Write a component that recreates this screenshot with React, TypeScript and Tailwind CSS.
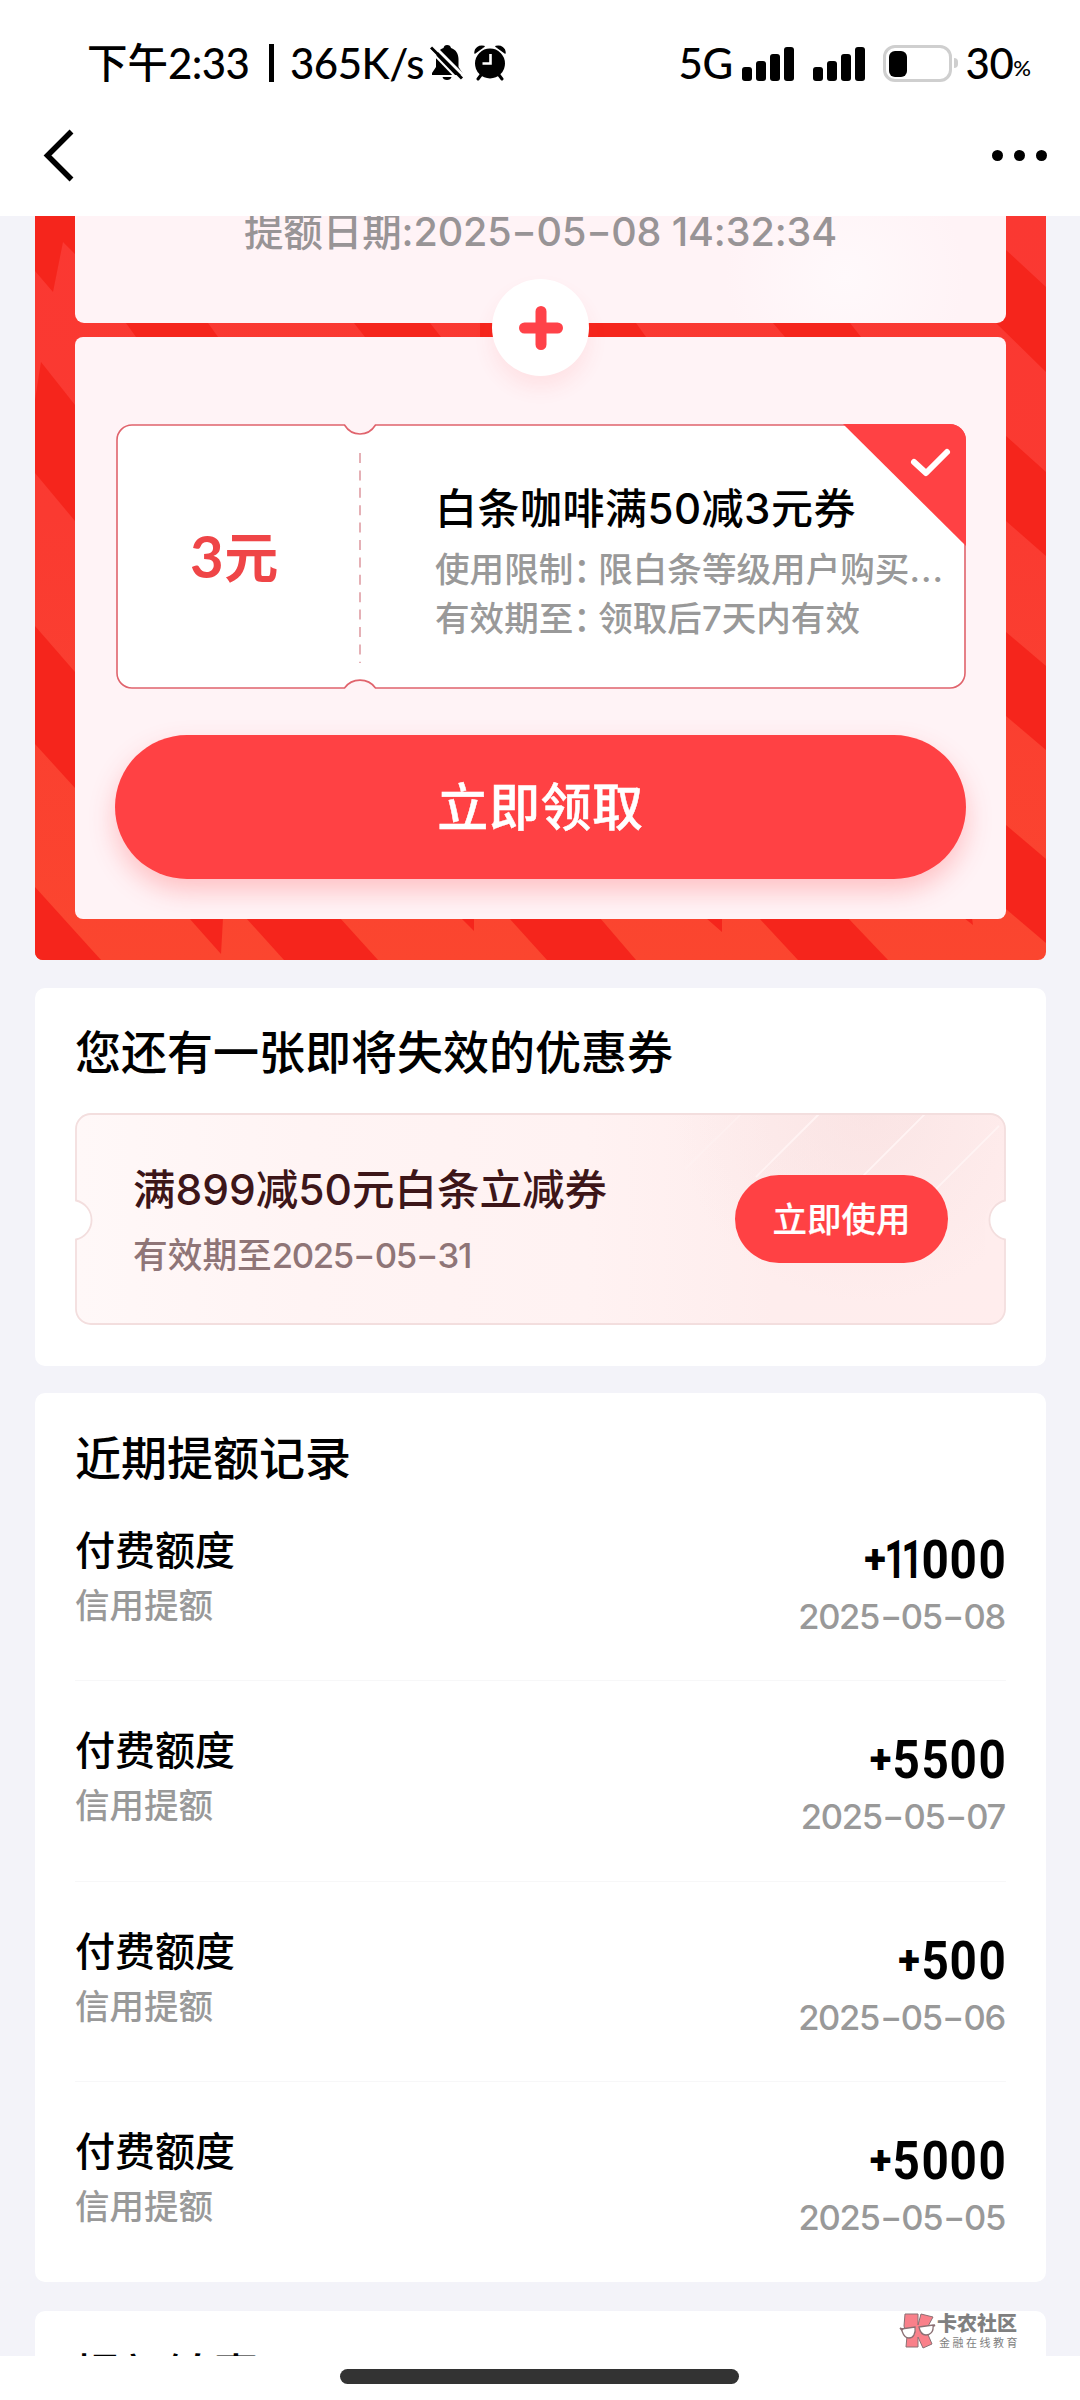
import React from 'react';

const records = [
  { amount: '+11000', date: '2025-05-08' },
  { amount: '+5500', date: '2025-05-07' },
  { amount: '+500', date: '2025-05-06' },
  { amount: '+5000', date: '2025-05-05' },
];

// Wide dash used between the date parts
function DateText({ text }: { text: string }) {
  return (
    <>
      {text.split('').map((ch, i) =>
        ch === '-' ? (
          <span key={i} className="inline-block w-[0.63em] text-center">
            <span className="inline-block scale-x-140">-</span>
          </span>
        ) : (
          <span key={i}>{ch}</span>
        )
      )}
    </>
  );
}

function Amount({ text }: { text: string }) {
  return (
    <p className="font-['Roboto'] font-bold text-[53px] leading-[56px] text-black flex items-center">
      {text.split('').map((ch, i) => {
        if (ch === '+') return <span key={i} className="w-[23px] text-[40px] font-extrabold flex justify-center">+</span>;
        if (ch === '1')
          return (
            <span key={i} className="w-[17px] flex justify-center">
              <span className="scale-x-70">1</span>
            </span>
          );
        return (
          <span key={i} className="w-[28.5px] flex justify-center">
            <span className="scale-x-90">{ch}</span>
          </span>
        );
      })}
    </p>
  );
}

function SignalBars() {
  return (
    <div className="flex items-end gap-1 h-[35px]">
      <div className="w-[10px] h-[14px] rounded-[3px] bg-black"></div>
      <div className="w-[10px] h-[20px] rounded-[3px] bg-black"></div>
      <div className="w-[10px] h-[27px] rounded-[3px] bg-black"></div>
      <div className="w-[10px] h-[34px] rounded-[3px] bg-black"></div>
    </div>
  );
}

function StatusBar() {
  return (
    <div className="h-[126px] pl-[87px] pr-[49px] flex items-center justify-between font-['Lato','Noto_Sans_CJK_SC',sans-serif] font-medium text-[42px] text-black">
      <div className="flex items-center h-[60px] whitespace-nowrap">
        <span className="w-[81px] text-[40.5px]">下午</span>
        <span className="w-[84px] tracking-[-0.6px]">2:33</span>
        <span className="w-[5px] h-[38px] bg-black ml-[17px] mr-[16px]"></span>
        <span className="w-[140px] tracking-[-0.5px]">365K/s</span>
        <svg className="w-[34px] h-[38px]" viewBox="0 0 34 38">
          <path d="M17 1c2.500 0 3.500 1.200 4 3 5 1.500 7.500 6 7.500 11v8l4 6v2H2v-2l4-6v-8c0-5 2.500-9.500 7.500-11 .5-1.800 1.500-3 3.500-3z" fill="#000" />
          <path d="M12.500 33h9c-.5 2-2 3-4.500 3s-4-1-4.500-3z" fill="#000" />
          <path d="M4 2l31 31" stroke="#fff" strokeWidth="3" />
          <path d="M1 3.500l31 31" stroke="#000" strokeWidth="3" />
          <path d="M-1 5.500l30 31" stroke="#fff" strokeWidth="2" />
        </svg>
        <svg className="w-[32px] h-[36px] ml-[10px]" viewBox="0 0 32 36">
          <path d="M1 8c0-5 4-7.500 9-6.500zM31 8c0-5-4-7.500-9-6.500z" fill="#000" stroke="#000" strokeWidth="1.500" strokeLinejoin="round" />
          <path d="M7 30l-3 4M25 30l3 4" stroke="#000" strokeWidth="3" strokeLinecap="round" />
          <circle cx="16" cy="18.500" r="15" fill="#000" />
          <path d="M16.500 9v9.500H8.500" stroke="#fff" strokeWidth="2.600" fill="none" />
        </svg>
      </div>
      <div className="flex items-center h-[60px]">
        <span className="w-[63px] tracking-[-0.5px]">5G</span>
        <SignalBars />
        <div className="w-[19px]"></div>
        <SignalBars />
        <div className="ml-[18px] w-[69px] h-[37px] rounded-[12px] border-[3px] border-[#cfcfcf] p-[3px]">
          <div className="w-[18px] h-[26px] rounded-[6px] bg-black"></div>
        </div>
        <div className="w-[4px] h-[10px] rounded-r-full bg-[#cfcfcf] ml-[2px]"></div>
        <span className="ml-[8px] tracking-[-0.5px]">30</span>
        <span className="text-[22px] mt-[8px]">%</span>
      </div>
    </div>
  );
}

function NavBar() {
  return (
    <div className="h-[90px] pl-[43px] pr-[33px] flex items-start justify-between">
      <svg className="w-[32px] h-[60px]" viewBox="0 0 32 60">
        <path d="M28.500 5.500L4.500 29.500l24 24" stroke="#000" strokeWidth="5.500" fill="none" />
      </svg>
      <div className="flex gap-[11px] pt-[24px]">
        <div className="w-[11px] h-[11px] rounded-full bg-black"></div>
        <div className="w-[11px] h-[11px] rounded-full bg-black"></div>
        <div className="w-[11px] h-[11px] rounded-full bg-black"></div>
      </div>
    </div>
  );
}

// Red striped artwork behind the reward panels
function Stripes() {
  return (
    <svg className="absolute inset-0 w-full h-full" viewBox="35 216 1011 744" preserveAspectRatio="none">
      <defs>
        <linearGradient id="light" x1="0" y1="0" x2="0" y2="1">
          <stop offset="0" stopColor="#fa3832" />
          <stop offset="0.4" stopColor="#fa3a31" />
          <stop offset="1" stopColor="#fb462f" />
        </linearGradient>
      </defs>
      <rect x="35" y="216" width="1011" height="744" fill="url(#light)" />
      <g fill="#f5251c">
        <path d="M35 216H75V254L63 242L53 292L35 271Z" />
        <path d="M41 362L75 405V521L35 473V400Z" />
        <path d="M35 626L75 672V788L35 744Z" />
        <path d="M35 887L101 960H35Z" />
        <path d="M126 323H208L218 337H136Z" />
        <path d="M354 323H430L441 337H365Z" />
        <path d="M480 323H636L646 337H480Z" />
        <path d="M773 323H850L861 337H785Z" />
        <path d="M189 918H223L221 954Z" />
        <path d="M246 918H340L378 960H284Z" />
        <path d="M461 918H474V931Z" />
        <path d="M509 918H600L636 960H547Z" />
        <path d="M706 918H722V932Z" />
        <path d="M759 918H848L888 960H798Z" />
        <path d="M964 918H972L973 925Z" />
        <path d="M996 323L1006 316V250L1046 287V372Z" />
        <path d="M1006 436L1046 472V556L1006 521Z" />
        <path d="M1006 632L1046 666V750L1006 716Z" />
        <path d="M1006 825L1046 859V943L1006 909Z" />
      </g>
    </svg>
  );
}

function CouponTicket() {
  return (
    <div className="relative w-[850px] h-[265px] flex items-center">
      <svg className="absolute inset-0 w-full h-full" viewBox="0 0 850 265">
        <path
          d="M16 1H228.500C236 13 252 13 259.500 1H834A15 15 0 0 1 849 16V249A15 15 0 0 1 834 264H259.500C252 253.500 236 253.500 228.500 264H16A15 15 0 0 1 1 249V16A15 15 0 0 1 16 1Z"
          fill="#fff"
          stroke="#e0636c"
          strokeWidth="1.600"
        />
        <path d="M244 29V239" stroke="#df9da4" strokeWidth="1.600" strokeDasharray="10 7.400" />
        <path d="M727 0H834A16 16 0 0 1 850 16V122Z" fill="#ff4144" />
        <path d="M798 38l12 11 21-21" stroke="#fff" strokeWidth="6" fill="none" strokeLinecap="round" strokeLinejoin="round" />
      </svg>
      <div className="relative w-[244px] pl-[74px] pt-[2px] text-[#ef4547] font-bold text-[54px] leading-[60px] whitespace-nowrap">
        <span className="font-['Lato'] text-[58px] tracking-[0.5px]">3</span>元
      </div>
      <div className="relative pl-[75px] pt-[10px]">
        <p className="text-black font-medium text-[42px] leading-[56px] tracking-[0.5px] whitespace-nowrap">白条咖啡满50减3元券</p>
        <p className="text-[#999999] font-medium text-[34.6px] leading-[49px] mt-[8px] whitespace-nowrap">
          使用限制<span className="tracking-[-9.700px]">：</span>限白条等级用户购买<span className="tracking-[1px]">...</span>
        </p>
        <p className="text-[#999999] font-medium text-[34.6px] leading-[49px] whitespace-nowrap">
          有效期至<span className="tracking-[-9.700px]">：</span>领取后7天内有效
        </p>
      </div>
    </div>
  );
}

function RewardCard() {
  return (
    <div className="relative h-[744px] px-[40px] rounded-b-[8px] overflow-hidden">
      <Stripes />
      <div className="relative h-[107px] rounded-b-[9px] overflow-hidden bg-[#fff3f6] bg-[radial-gradient(circle_at_770px_60px,#fff9fb_0px,#fff3f6_120px)]">
        <p className="pt-[1px] text-center text-[#989496] font-medium text-[39.5px] leading-[31px] tracking-[-0.1px] whitespace-nowrap">
          提额日期:<DateText text="2025-05-08" /> 14:32:34
        </p>
      </div>
      <div className="relative mt-[14px] h-[582px] rounded-[8px] bg-[#fff3f6] px-[41px] pt-[87px]">
        <CouponTicket />
        <button className="mt-[46px] -ml-[1px] w-[851px] h-[144px] pt-[2px] rounded-full bg-[#ff4144] text-white font-medium text-[51px] tracking-[0.6px] [-webkit-text-stroke:0.5px_white] shadow-[0_12px_26px_rgba(255,65,68,0.28)]">
          立即领取
        </button>
      </div>
      {/* Joins the two panels */}
      <div className="absolute left-[457px] top-[63px] w-[97px] h-[97px] rounded-full bg-white shadow-[0_12px_20px_rgba(255,65,68,0.09)] flex items-center justify-center">
        <svg className="w-[44px] h-[44px]" viewBox="0 0 44 44">
          <path d="M22 5.500v33M5.500 22h33" stroke="#ff4249" strokeWidth="11" strokeLinecap="round" />
        </svg>
      </div>
    </div>
  );
}

function ExpiringCard() {
  return (
    <div className="mt-[28px] h-[378px] px-[40px] pt-[35px] rounded-[10px] bg-white">
      <h2 className="text-black font-medium text-[46px] leading-[58px]">您还有一张即将失效的优惠券</h2>
      <div className="relative mt-[32px] w-[931px] h-[212px] flex items-center justify-between pl-[58px] pr-[58px]">
        <svg className="absolute inset-0 w-full h-full" viewBox="0 0 931 212">
          <defs>
            <linearGradient id="ticket" x1="0" y1="0" x2="1" y2="0">
              <stop offset="0" stopColor="#fff8f8" />
              <stop offset="0.25" stopColor="#fff4f4" />
              <stop offset="0.55" stopColor="#fff2f2" />
              <stop offset="0.75" stopColor="#feeded" />
              <stop offset="1" stopColor="#ffeded" />
            </linearGradient>
            <linearGradient id="band" gradientUnits="userSpaceOnUse" x1="850" y1="0" x2="715" y2="130">
              <stop offset="0" stopColor="#fae3e3" />
              <stop offset="1" stopColor="#fae3e3" stopOpacity="0" />
            </linearGradient>
            <radialGradient id="glow" gradientUnits="userSpaceOnUse" cx="790" cy="0" r="190">
              <stop offset="0" stopColor="#f8e0e0" stopOpacity="0.6" />
              <stop offset="1" stopColor="#f8e0e0" stopOpacity="0" />
            </radialGradient>
          </defs>
          <path
            d="M16 1H915A15 15 0 0 1 930 16V87.500A20 20 0 0 0 930 126.500V196A15 15 0 0 1 915 211H16A15 15 0 0 1 1 196V126.500A20 20 0 0 0 1 87.500V16A15 15 0 0 1 16 1Z"
            fill="url(#ticket)"
          />
          <path d="M600 1H915A15 15 0 0 1 930 16V87Q912 90 910 107V211H600Z" fill="url(#glow)" />
          <path d="M745 1H850L740 111H635Z" fill="url(#band)" opacity="0.4" />
          <g stroke="#fff3f3" strokeWidth="1.800">
            <path d="M666 1L610 56" opacity="0.5" />
            <path d="M744 1L681 64" />
            <path d="M850 1L787 64" />
            <path d="M924 13L860 77" />
          </g>
          <path
            d="M16 1H915A15 15 0 0 1 930 16V87.500A20 20 0 0 0 930 126.500V196A15 15 0 0 1 915 211H16A15 15 0 0 1 1 196V126.500A20 20 0 0 0 1 87.500V16A15 15 0 0 1 16 1Z"
            fill="none"
            stroke="#f3dede"
            strokeWidth="1.800"
          />
        </svg>
        <div className="relative pt-[2px]">
          <p className="text-[#3d1619] font-medium text-[42.5px] leading-[56px] whitespace-nowrap">满899减50元白条立减券</p>
          <p className="text-[#8f7577] font-medium text-[34.700px] leading-[48px] mt-[13px] whitespace-nowrap">
            有效期至<span className="tracking-[-1.400px]"><DateText text="2025-05-31" /></span>
          </p>
        </div>
        <button className="relative w-[213px] h-[88px] pt-[1px] rounded-full bg-[#ff4144] text-white font-medium text-[34.5px] [-webkit-text-stroke:0.2px_white]">立即使用</button>
      </div>
    </div>
  );
}

function RecordsCard() {
  return (
    <div className="mt-[27px] h-[889px] px-[40px] pt-[36px] rounded-[10px] bg-white">
      <h2 className="text-black font-medium text-[46px] leading-[58px] -mb-[6px]">近期提额记录</h2>
      {records.map((record, index) => (
        <div key={index} className="h-[200.3px] flex justify-between border-b border-[#f7f7f8] last:border-0">
          <div className="pt-[44px]">
            <p className="text-black font-medium text-[40px] leading-[52px]">付费额度</p>
            <p className="text-[#999999] font-medium text-[34.5px] leading-[48px] mt-[5px]">信用提额</p>
          </div>
          <div className="pt-[51px] flex flex-col items-end">
            <Amount text={record.amount} />
            <p className="text-[#999999] font-medium text-[34.5px] leading-[40px] mt-[9px] mr-[1px] tracking-[-1.300px]">
              <DateText text={record.date} />
            </p>
          </div>
        </div>
      ))}
    </div>
  );
}

function Watermark() {
  return (
    <div className="absolute left-[899px] top-[2312px] flex items-start">
      <svg className="w-[37px] h-[38px]" viewBox="0 0 37 38">
        <g fill="#f9808a" stroke="#8b7074" strokeWidth="1">
          <path d="M6 2H19V13L22 2L34 5L27 18L33 32L24 36L19 25V35H7L8 24L5 14Z" />
        </g>
        <g fill="#fff" stroke="#8b7074" strokeWidth="1.300">
          <path d="M2 17L16 15C17 22 14 26 10 26C6 26 4 22 3 19Z" />
          <path d="M20 15L34 13C35 20 31 23 27 23C23 23 21 20 20 15Z" />
        </g>
        <path d="M1 16l3 2M34 14l2-1" stroke="#8b7074" strokeWidth="2" />
      </svg>
      <div className="ml-[1px] text-[#808080]">
        <p className="font-black text-[20px] leading-[24px]">卡农社区</p>
        <p className="text-[11px] leading-[14px] tracking-[2.500px] pl-[2px]">金融在线教育</p>
      </div>
    </div>
  );
}

export default function App() {
  return (
    <div className="relative w-[1080px] h-[2400px] overflow-hidden bg-white flex flex-col font-['Inter','Noto_Sans_CJK_SC',sans-serif]">
      <StatusBar />
      <NavBar />
      <div className="h-[2140px] shrink-0 overflow-hidden bg-[#f3f3f9] pl-[35px] pr-[34px]">
        <RewardCard />
        <ExpiringCard />
        <RecordsCard />
        <div className="mt-[29px] h-[200px] px-[40px] pt-[35px] rounded-[10px] bg-white">
          <h2 className="text-black font-medium text-[46px] leading-[58px]">提额锦囊</h2>
        </div>
      </div>
      {/* Home Indicator */}
      <div className="flex justify-center pt-[13px] pr-[2px]">
        <div className="w-[399px] h-[15px] rounded-full bg-[#333333]"></div>
      </div>
      <Watermark />
    </div>
  );
}
